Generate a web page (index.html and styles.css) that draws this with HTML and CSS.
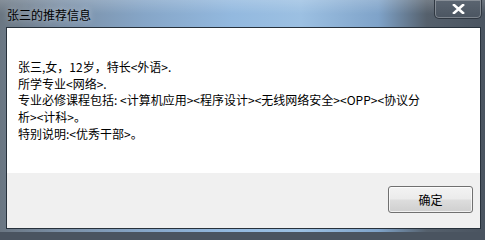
FILE: index.html
```html
<!DOCTYPE html>
<html lang="zh-CN">
<head>
<meta charset="utf-8">
<title>张三的推荐信息</title>
<link rel="stylesheet" href="styles.css">
</head>
<body>
<div class="window">
  <div class="titlebar">
    <span class="title">张三的推荐信息</span>
    <div class="close">
      <svg width="13" height="10" viewBox="0 0 13 10"><path d="M2 1 L11 9 M11 1 L2 9" stroke="#fff" stroke-width="2.6" stroke-linecap="square"/></svg>
    </div>
  </div>
  <div class="client">
    <div class="content">
      <div class="line">张三,女，12岁，特长&lt;外语&gt;.</div>
      <div class="line">所学专业&lt;网络&gt;.</div>
      <div class="line">专业必修课程包括: &lt;计算机应用&gt;&lt;程序设计&gt;&lt;无线网络安全&gt;&lt;OPP&gt;&lt;协议分</div>
      <div class="line">析&gt;&lt;计科&gt;。</div>
      <div class="line">特别说明:&lt;优秀干部&gt;。</div>
    </div>
    <div class="footer">
      <button class="btn">确定</button>
    </div>
  </div>
</div>
</body>
</html>
```
FILE: styles.css
```css
html, body {
  margin: 0;
  padding: 0;
  width: 485px;
  height: 232px;
  overflow: hidden;
  background: #4a5460;
}
.window {
  width: 485px;
  height: 232px;
  box-sizing: border-box;
  padding: 0 4px 3px 6px;
  display: flex;
  flex-direction: column;
  background:
    linear-gradient(180deg, rgba(255,255,255,0.18) 0px, rgba(255,255,255,0) 14px),
    linear-gradient(90deg, #6a7682 0%, #7a8ea4 12%, #86a6c8 30%, #93b9df 48%, #9cc0e2 62%, #7fa3c9 78%, #55606c 88%, #4a5460 100%);
  font-family: "Noto Sans CJK SC", "Noto Sans", sans-serif;
}
.titlebar {
  height: 27px;
  flex: none;
  display: flex;
  align-items: flex-start;
  justify-content: space-between;
  position: relative;
}
.title {
  font-size: 12px;
  line-height: 14px;
  color: #000;
  margin: 8px 0 0 1px;
  text-shadow: 0 0 6px rgba(255,255,255,0.6);
}
.close {
  position: absolute;
  left: 428px;
  top: 0;
  width: 46px;
  height: 18px;
  border: 1px solid #2f3741;
  border-top: none;
  border-radius: 0 0 5px 5px;
  background: linear-gradient(180deg, #5b6571 0%, #4b5561 100%);
  box-shadow: inset 0 0 0 1px rgba(255,255,255,0.28);
  display: flex;
  align-items: center;
  justify-content: center;
}
.client {
  flex: 1;
  border: 1px solid #27313b;
  display: flex;
  flex-direction: column;
  background: #fff;
}
.content {
  height: 145px;
  box-sizing: border-box;
  padding: 31px 0 0 11px;
  font-size: 12px;
  line-height: 16.7px;
  color: #000;
  white-space: nowrap;
}
.footer {
  flex: 1;
  background: #f0f0f0;
  display: flex;
  justify-content: flex-end;
  align-items: flex-start;
  padding: 13px 7px 0 0;
}
.btn {
  width: 85px;
  height: 27px;
  border: 1px solid #707070;
  border-radius: 3px;
  background: linear-gradient(180deg, #f3f3f3 0%, #ebebeb 48%, #dddddd 52%, #cfcfcf 100%);
  box-shadow: inset 0 0 0 1px rgba(255,255,255,0.7);
  font-family: "Noto Sans CJK SC", "Noto Sans", sans-serif;
  font-size: 12px;
  color: #000;
  padding: 0;
}
```
